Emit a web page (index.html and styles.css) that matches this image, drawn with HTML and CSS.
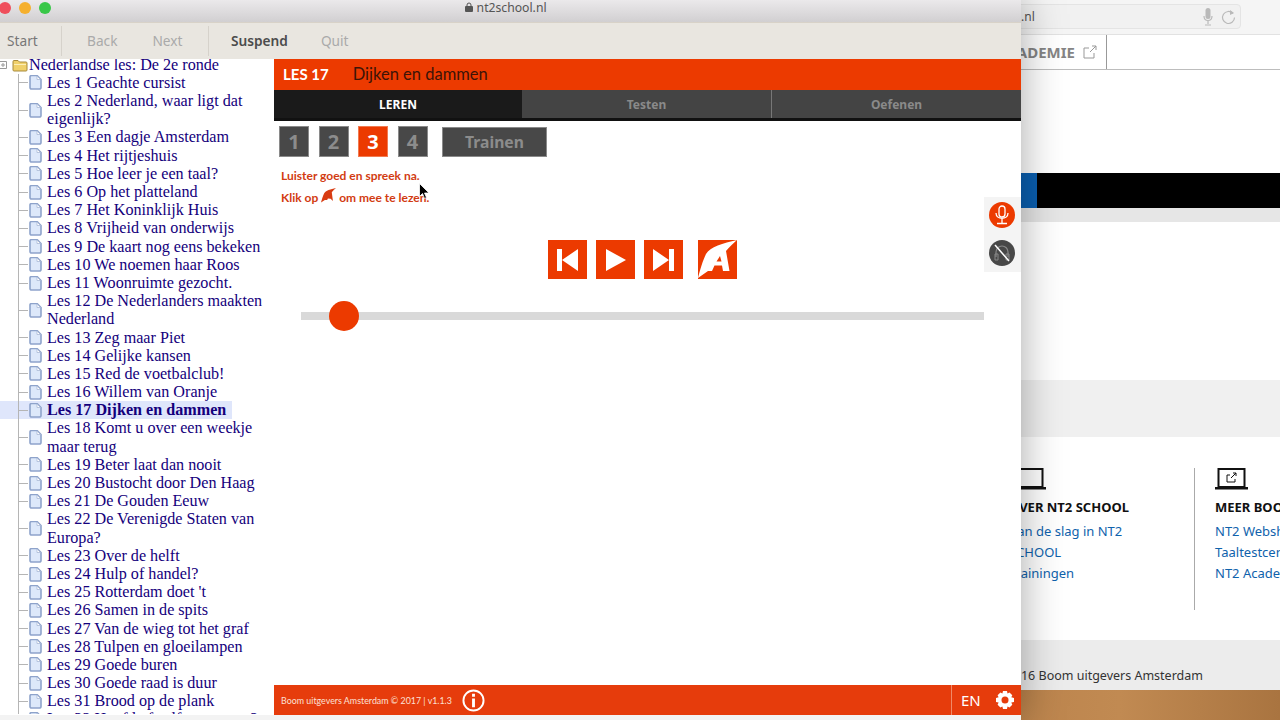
FILE: index.html
```html
<!DOCTYPE html>
<html lang="nl">
<head>
  <meta charset="UTF-8" />
  <title>nt2school.nl</title>
  <link rel="stylesheet" href="styles.css">
</head>
<body>
  <svg class="defs" width="0" height="0">
    <symbol id="page" viewBox="0 0 13 15">
      <path d="M1 2a1.500 1.500 0 0 1 1.500-1.500h5.500l4 4v8a1.500 1.500 0 0 1-1.500 1.500h-8a1.500 1.500 0 0 1-1.500-1.500z" fill="#dde8fa" stroke="#8ea3cb" stroke-width="1.600"/>
      <path d="M8 1v3.500h3.500z" fill="#fff" stroke="#a9b9d6" stroke-width=".8"/>
    </symbol>
  </svg>

  <div class="site">
    <div class="site-top">
      <div class="url-bar">
        <span>.nl</span>
        <svg class="url-icon" width="34" height="18" viewBox="0 0 34 18">
          <rect x="2.500" y="0" width="5" height="11" rx="2.500" fill="#b9b9b9"/>
          <path d="M1 8c0 6 8 6 8 0M5 13v3M2 17h6" fill="none" stroke="#b9b9b9" stroke-width="1.200"/>
          <path d="M30 5.500a6 6 0 1 0 1.500 4" fill="none" stroke="#b9b9b9" stroke-width="1.200"/>
          <path d="M27 2l4 3-4 2z" fill="#b9b9b9"/>
        </svg>
      </div>
    </div>
    <div class="site-nav">
      <span class="nav-item">ACADEMIE<svg width="14" height="14" viewBox="0 0 14 14"><path d="M11 8v5H1V3h5M7 7l6-6M9 1h4v4" fill="none" stroke="#999"/></svg></span>
    </div>
    <div class="site-hero"></div>
    <div class="site-bar"><span class="bar-blue"></span></div>
    <div class="site-shade"></div>
    <div class="site-body"></div>
    <div class="site-band"></div>
    <div class="site-links">
      <div class="link-col over">
        <svg class="laptop" width="34" height="22" viewBox="0 0 34 22"><path d="M3.500 1h26v18h-26z" fill="none" stroke="#111" stroke-width="2"/><path d="M0 19h33v2.500H0z" fill="#111"/></svg>
        <h4>OVER NT2 SCHOOL</h4>
        <a>Aan de slag in NT2</a>
        <a>SCHOOL</a>
        <a>Trainingen</a>
      </div>
      <div class="link-col last">
        <svg class="laptop" width="34" height="22" viewBox="0 0 34 22"><path d="M3.500 1h26v18h-26z" fill="none" stroke="#111" stroke-width="2"/><path d="M0 19h33v2.500H0z" fill="#111"/><path d="M20 11v3h-8V7h3M16 10l5-5M18 5h3v3" fill="none" stroke="#111"/></svg>
        <h4>MEER BOOM</h4>
        <a>NT2 Webshop</a>
        <a>Taaltestcentrum</a>
        <a>NT2 Academie</a>
      </div>
    </div>
    <div class="site-foot"><span>© 2016 Boom uitgevers Amsterdam</span></div>
    <div class="desk"></div>
  </div>

  <div class="app">
    <div class="titlebar">
      <span class="light red"></span>
      <span class="light yellow"></span>
      <span class="light green"></span>
      <div class="title">
        <svg width="8" height="10" viewBox="0 0 8 10"><path d="M2 4.500V3a2 2 0 0 1 4 0v1.500" fill="none" stroke="#555"/><rect y="4" width="8" height="6" rx="1" fill="#555"/></svg>
        nt2school.nl
      </div>
    </div>

    <div class="toolbar">
      <div class="tool-group first"><span class="tool off-soft">Start</span></div>
      <div class="tool-group second"><span class="tool off">Back</span><span class="tool off">Next</span></div>
      <div class="tool-group third"><span class="tool on">Suspend</span><span class="tool off">Quit</span></div>
    </div>

    <div class="main">
      <div class="tree">
        <div class="root">
          <svg class="plus" width="8" height="8" viewBox="0 0 8 8"><path d="M.5.500h7v7h-7zM2 4h4M4 2v4" fill="#fff" stroke="#999"/></svg>
          <svg class="folder" width="16" height="13" viewBox="0 0 16 13"><path d="M1 2.500a1 1 0 0 1 1-1h4l1.500 1.500H14a1 1 0 0 1 1 1v7a1 1 0 0 1-1 1H2a1 1 0 0 1-1-1z" fill="#f0d06a" stroke="#a88b3c"/><path d="M2 5.500h12" stroke="#fbeeb8"/></svg>
          <span>Nederlandse les: De 2e ronde</span>
        </div>
        <ul class="lessons" id="lessons"></ul>
      </div>

      <div class="lesson">
        <div class="lesson-head"><b>LES 17</b><span>Dijken en dammen</span></div>
        <div class="tabs">
          <div class="tab active">LEREN</div>
          <div class="tab">Testen</div>
          <div class="tab split">Oefenen</div>
        </div>

        <div class="steps">
          <span class="step">1</span>
          <span class="step">2</span>
          <span class="step current">3</span>
          <span class="step">4</span>
          <span class="train">Trainen</span>
        </div>

        <div class="hint">
          <p>Luister goed en spreek na.</p>
          <p>Klik op
            <svg class="hint-icon" width="15" height="15" viewBox="0 0 39 39"><path d="M39 0C25 3 12 7 8 14 5 20 2 30 0 38l10-7h6l2-4 7 1 6 6L28 11c3-4 7-7 11-11z" fill="#d83c12"/></svg>
            om mee te lezen.</p>
        </div>

        <div class="controls">
          <span class="ctrl"><svg width="21" height="22" viewBox="0 0 21 22"><path d="M0 0h5v22H0zM5 11L21 0v22z" fill="#fff"/></svg></span>
          <span class="ctrl"><svg width="20" height="22" viewBox="0 0 20 22"><path d="M0 0l20 11L0 22z" fill="#fff"/></svg></span>
          <span class="ctrl"><svg width="21" height="22" viewBox="0 0 21 22"><path d="M21 0h-5v22h5zM16 11L0 0v22z" fill="#fff"/></svg></span>
          <span class="ctrl read"><svg width="39" height="39" viewBox="0 0 39 39"><path fill-rule="evenodd" d="M39 0C25 3 12 7 8 14 5 20 2 30 0 38l10-7h4l2.500-5.500H24l1 5.500h6.500L28 11c3-4 7-7 11-11zM18.500 21.500l3.500-5.500 1.500 5.500z" fill="#fff"/></svg></span>
        </div>

        <div class="slider"><span class="knob"></span></div>

        <div class="side-tools">
          <span class="round mic">
            <svg width="16" height="20" viewBox="0 0 16 20"><rect x="5" y="1" width="6" height="11" rx="3" fill="none" stroke="#fff" stroke-width="1.300"/><path d="M2 8c0 7 12 7 12 0M8 14v4M3 18.500h10" fill="none" stroke="#fff" stroke-width="1.300"/></svg>
          </span>
          <span class="round phones">
            <svg width="20" height="20" viewBox="0 0 20 20"><path d="M4 14V9a6 6 0 0 1 12 0v5" fill="none" stroke="#888" stroke-width="1.200"/><path d="M3 11h3v6H3zM14 11h3v6h-3z" fill="none" stroke="#888"/><path d="M3 2l14 16" stroke="#fff" stroke-width="1.500"/></svg>
          </span>
        </div>

        <div class="lesson-foot">
          <span class="copy">Boom uitgevers Amsterdam © 2017 | v1.1.3</span>
          <svg class="info" width="23" height="23" viewBox="0 0 24 24"><circle cx="12" cy="12" r="10.500" fill="none" stroke="#fff" stroke-width="2"/><path d="M10.500 10h3v9h-3zM10.500 5h3v3h-3z" fill="#fff"/></svg>
          <span class="foot-right">
            <span class="lang">EN</span>
            <svg width="18" height="18" viewBox="0 0 18 18"><path d="M7 0h4l.5 2.500 2-1 2.800 2.800-1 2 2.700.7v4l-2.700.6 1 2.100-2.800 2.800-2-1L11 18H7l-.6-2.500-2 1-2.800-2.800 1-2.100L0 11V7l2.600-.7-1-2 2.800-2.800 2 1z" fill="#fff"/><circle cx="9" cy="9" r="3.500" fill="#e63c0c"/></svg>
          </span>
        </div>
      </div>
    </div>
  </div>

  <svg class="cursor" width="11" height="17" viewBox="0 0 11 17"><path d="M.5.500v13l3-3 2 5 2-1-2-4.500h4.500z" fill="#000" stroke="#fff" stroke-width=".8"/></svg>

  <script>
    const lessons = [
      "Les 1 Geachte cursist",
      "Les 2 Nederland, waar ligt dat eigenlijk?",
      "Les 3 Een dagje Amsterdam",
      "Les 4 Het rijtjeshuis",
      "Les 5 Hoe leer je een taal?",
      "Les 6 Op het platteland",
      "Les 7 Het Koninklijk Huis",
      "Les 8 Vrijheid van onderwijs",
      "Les 9 De kaart nog eens bekeken",
      "Les 10 We noemen haar Roos",
      "Les 11 Woonruimte gezocht.",
      "Les 12 De Nederlanders maakten Nederland",
      "Les 13 Zeg maar Piet",
      "Les 14 Gelijke kansen",
      "Les 15 Red de voetbalclub!",
      "Les 16 Willem van Oranje",
      "Les 17 Dijken en dammen",
      "Les 18 Komt u over een weekje maar terug",
      "Les 19 Beter laat dan nooit",
      "Les 20 Bustocht door Den Haag",
      "Les 21 De Gouden Eeuw",
      "Les 22 De Verenigde Staten van Europa?",
      "Les 23 Over de helft",
      "Les 24 Hulp of handel?",
      "Les 25 Rotterdam doet 't",
      "Les 26 Samen in de spits",
      "Les 27 Van de wieg tot het graf",
      "Les 28 Tulpen en gloeilampen",
      "Les 29 Goede buren",
      "Les 30 Goede raad is duur",
      "Les 31 Brood op de plank",
      "Les 32 Hoofd of zelf maar eens?"
    ];
    let html = "";
    lessons.forEach(name => {
      const cls = name.startsWith("Les 17 ") ? "lesson-row selected" : "lesson-row";
      html += `<li class="${cls}"><svg class="page"><use href="#page"/></svg><span>${name}</span></li>`;
    });
    document.getElementById("lessons").innerHTML = html;
  </script>
</body>
</html>
```

FILE: styles.css
```css
html, body {
  margin: 0;
  height: 720px;
  overflow: hidden;
}
body {
  position: relative;
  background: #fff;
  font-family: "Noto Sans", sans-serif;
}
.defs {
  position: absolute;
}

/* window behind */
.site {
  position: absolute;
  left: 960px;
  top: 0;
  width: 320px;
  height: 720px;
  display: flex;
  flex-direction: column;
  overflow: hidden;
  background: #fff;
}
.site-top {
  height: 35px;
  flex: none;
  box-sizing: border-box;
  background: #f5f5f5;
  border-bottom: 1px solid #e2e2e2;
  padding-top: 4px;
}
.url-bar {
  width: 279px;
  height: 23px;
  background: #f1f1f1;
  border: 1px solid #e4e4e4;
  border-radius: 4px;
  display: flex;
  align-items: center;
  justify-content: flex-end;
  font-size: 12px;
  color: #555;
}
.url-bar span {
  margin-right: auto;
  margin-left: 60px;
}
.url-icon {
  margin-right: 3px;
}
.site-nav {
  height: 35px;
  flex: none;
  box-sizing: border-box;
  border-bottom: 1px solid #bdbdbd;
  display: flex;
}
.nav-item {
  width: 147px;
  border-right: 1px solid #999;
  box-sizing: border-box;
  font-size: 15px;
  font-weight: 700;
  color: #858585;
  display: flex;
  align-items: center;
  justify-content: flex-end;
  gap: 8px;
  padding-right: 9px;
  white-space: nowrap;
}
.site-hero {
  height: 103px;
  flex: none;
}
.site-bar {
  height: 35px;
  flex: none;
  background: #000;
}
.bar-blue {
  display: block;
  width: 77px;
  height: 100%;
  background: #0a5fb0;
}
.site-shade {
  height: 14px;
  flex: none;
  background: #e6e6e6;
}
.site-body {
  height: 158px;
  flex: none;
}
.site-band {
  height: 57px;
  flex: none;
  background: #f0f0f0;
}
.site-links {
  height: 203px;
  flex: none;
  display: flex;
  padding-left: 49px;
  padding-top: 31px;
  box-sizing: border-box;
}
.link-col {
  width: 186px;
  height: 142px;
  border-right: 1px solid #aaa;
  box-sizing: border-box;
  display: flex;
  flex-direction: column;
  align-items: flex-start;
  flex: none;
}
.link-col.last {
  border: 0;
  padding-left: 20px;
  white-space: nowrap;
}
.laptop {
  height: 22px;
  margin-bottom: 8px;
}
.over .laptop {
  margin-left: 4px;
}
.link-col h4 {
  margin: 0 0 5px;
  font-size: 13px;
  line-height: 18px;
  color: #111;
  white-space: nowrap;
}
.link-col a {
  font-size: 13px;
  line-height: 21px;
  color: #0f62ac;
  white-space: nowrap;
}
.site-foot {
  height: 50px;
  flex: none;
  background: #ececec;
  font-size: 12.500px;
  color: #333;
  line-height: 72px;
  padding-left: 33px;
  white-space: nowrap;
}
.desk {
  flex: 1;
  background: linear-gradient(90deg, #b9814a, #c18a52 50%, #a97440);
}

/* front window */
.app {
  position: absolute;
  left: 0;
  top: 0;
  width: 1021px;
  height: 720px;
  background: #f3f3f3;
  box-shadow: 0 0 40px rgba(0, 0, 0, .35);
  display: flex;
  flex-direction: column;
}
.titlebar {
  height: 22px;
  flex: none;
  background: linear-gradient(#ebe9eb, #d1cfd1);
  position: relative;
  display: flex;
  align-items: flex-start;
}
.light {
  position: absolute;
  top: 2px;
  width: 12px;
  height: 12px;
  border-radius: 50%;
}
.red { left: -1px; background: #ef4f5c; }
.yellow { left: 19px; background: #f5b02e; }
.green { left: 39px; background: #39c748; }
.title {
  width: 100%;
  text-align: center;
  font-size: 12.200px;
  line-height: 16px;
  color: #555;
  padding-right: 9px;
  box-sizing: border-box;
}
.toolbar {
  height: 37px;
  flex: none;
  background: #e9e6e0;
  border-top: 1px solid #d8d2c8;
  box-sizing: border-box;
  display: flex;
  font-size: 13.700px;
}
.tool-group {
  display: flex;
  box-sizing: border-box;
  margin: 3px 0;
  line-height: 30px;
}
.first {
  width: 62px;
  padding-left: 7px;
  border-right: 1px solid #d6d2cb;
}
.second {
  width: 147px;
  padding-left: 25px;
  gap: 35px;
  border-right: 1px solid #d6d2cb;
}
.third {
  padding-left: 22px;
  gap: 33px;
}
.off-soft { color: #777; }
.off { color: #aaa; }
.on { color: #4c4c4c; font-weight: 600; }

.main {
  height: 656px;
  flex: none;
  display: flex;
  background: #fff;
}

/* lesson tree */
.tree {
  width: 274px;
  flex: none;
  height: 655px;
  overflow: hidden;
  font-family: "Liberation Serif", serif;
  font-size: 16.150px;
  line-height: 18.180px;
  color: #14007c;
}
.root {
  display: flex;
  align-items: center;
  height: 12px;
  margin-bottom: 2.900px;
}
.plus {
  margin: 0 5px 0 -1px;
}
.folder {
  margin-right: 1px;
}
.root span {
  white-space: nowrap;
}
.lessons {
  list-style: none;
  margin: 0;
  padding: 0 0 0 18px;
  background: linear-gradient(#b5b5b5, #b5b5b5) 18px 0 / 1px 100% no-repeat;
}
.lesson-row {
  display: flex;
  align-items: center;
  width: 248px;
}
.lesson-row::before {
  content: "";
  width: 10px;
  height: 1px;
  background: #b5b5b5;
  flex: none;
}
.page {
  width: 13px;
  height: 15px;
  flex: none;
  margin-left: 1px;
  margin-right: 5px;
}
.selected {
  font-weight: 700;
  width: max-content;
  background: linear-gradient(#b5b5b5, #b5b5b5) 18px 0 / 1px 100% no-repeat, #dfe6fb;
  padding-right: 6px;
  margin-left: -18px;
  padding-left: 18px;
}

/* lesson panel */
.lesson {
  flex: 1;
  position: relative;
  display: flex;
  flex-direction: column;
  min-width: 0;
}
.lesson-head {
  height: 31px;
  flex: none;
  background: #ec3a00;
  display: flex;
  align-items: center;
  padding: 0 0 2px 9px;
  box-sizing: border-box;
  gap: 24px;
  font-family: Lato, sans-serif;
}
.lesson-head b {
  color: #fff;
  font-size: 15px;
}
.lesson-head span {
  font-size: 16.500px;
  color: #3c1408;
}
.tabs {
  height: 31px;
  flex: none;
  display: flex;
  background: #111;
  padding-bottom: 3px;
  box-sizing: border-box;
}
.tab {
  flex: 1;
  background: #444;
  color: #8a8a8a;
  font-size: 12px;
  font-weight: 700;
  text-align: center;
  line-height: 29px;
}
.tab.split {
  border-left: 1px solid #777;
}
.tab.active {
  flex: 0 0 248px;
  background: #1a1a1a;
  color: #fff;
}
.steps {
  display: flex;
  align-items: center;
  margin: 5px 0 0 5px;
  height: 31px;
  gap: 9.500px;
}
.step {
  width: 30px;
  height: 31px;
  box-sizing: border-box;
  background: #484848;
  color: #8c8c8c;
  font-size: 20px;
  font-weight: 700;
  text-align: center;
  line-height: 30px;
  border: 1px solid #8a8a8a;
}
.step.current {
  background: #ec3a00;
  color: #fff;
  border-color: #f27a50;
}
.train {
  margin-left: 5px;
  width: 105px;
  height: 30px;
  background: #484848;
  color: #8c8c8c;
  font-size: 15.700px;
  font-weight: 700;
  text-align: center;
  line-height: 29px;
  border: 1px solid #8a8a8a;
  box-sizing: border-box;
  margin-top: 1px;
}
.hint {
  margin: 8px 0 0 7px;
  font-family: Lato, sans-serif;
  font-size: 12px;
  font-weight: 700;
  color: #d23c12;
}
.hint p {
  margin: 0;
  height: 22px;
  line-height: 22px;
  white-space: nowrap;
}
.hint-icon {
  vertical-align: -1px;
}
.controls {
  display: flex;
  margin: 31px 0 0 274px;
  gap: 9px;
}
.ctrl {
  width: 39px;
  height: 39px;
  background: #ec3a00;
  display: flex;
  align-items: center;
  justify-content: center;
}
.read {
  margin-left: 6px;
}
.slider {
  height: 8px;
  background: #d9d9d9;
  margin: 33px 37px 0 27px;
  position: relative;
}
.knob {
  position: absolute;
  left: 28px;
  top: -11px;
  width: 30px;
  height: 30px;
  border-radius: 50%;
  background: #ec3a00;
}
.side-tools {
  position: absolute;
  right: 0;
  top: 138px;
  width: 37px;
  height: 75px;
  background: #f4f4f4;
  display: flex;
  flex-direction: column;
  align-items: center;
  justify-content: center;
  gap: 12px;
  padding: 0 1px 1px 0;
  box-sizing: border-box;
}
.round {
  width: 26px;
  height: 26px;
  border-radius: 50%;
  display: flex;
  align-items: center;
  justify-content: center;
}
.mic { background: #ec3a00; }
.phones { background: #484848; }
.lesson-foot {
  position: absolute;
  left: 0;
  right: 0;
  bottom: 0;
  height: 30px;
  background: #e63c0c;
  display: flex;
  align-items: center;
  color: #fff;
  padding-left: 7px;
}
.copy {
  font-family: Lato, sans-serif;
  font-size: 8.900px;
  color: #fbe0d6;
  white-space: nowrap;
}
.info {
  margin-left: 10px;
}
.foot-right {
  margin-left: auto;
  width: 70px;
  height: 100%;
  border-left: 1px solid #f08a68;
  box-sizing: border-box;
  display: flex;
  align-items: center;
  gap: 15px;
  padding-left: 9px;
}
.lang {
  font-size: 15px;
}
.cursor {
  position: absolute;
  left: 419px;
  top: 183px;
}
```
